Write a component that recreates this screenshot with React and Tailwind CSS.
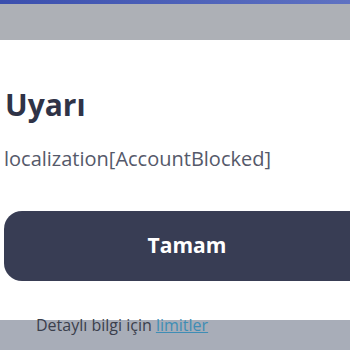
export default function App() {
  return (
    <div className="w-[350px] h-[350px] overflow-hidden flex flex-col bg-[#a8adb8]" style={{ fontFamily: "'Open Sans', 'Noto Sans', sans-serif" }}>
      <div className="h-[4px] shrink-0 bg-gradient-to-r from-[#3b4fae] to-[#5f72c2]" />
      <div className="h-[36px] shrink-0 bg-[#adb0b6]" />
      <div className="h-[280px] shrink-0 bg-white pl-[4px] pt-[45px] flex flex-col">
        <h1 className="text-[30px] leading-[40px] font-bold text-[#2f3347] pl-[1px]">Uyarı</h1>
        <p className="mt-[21px] text-[20px] leading-[26px] text-[#55596a]">localization[AccountBlocked]</p>
        <button className="mt-[39px] h-[70px] w-[366px] shrink-0 rounded-[18px] bg-[#383d54] text-white text-[21px] font-bold">
          Tamam
        </button>
      </div>
      <div className="-mt-[6px] pl-[36px] text-[16px] leading-[22px] text-[#3b3f4c]">
        Detaylı bilgi için <span className="text-[#3e8db5] underline">limitler</span>
      </div>
    </div>
  );
}
